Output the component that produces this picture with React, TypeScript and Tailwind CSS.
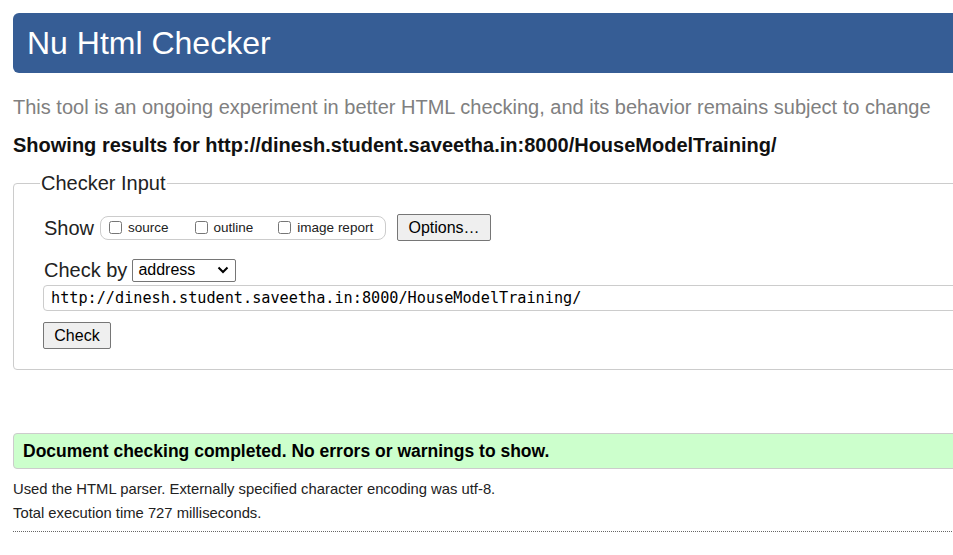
import React from 'react';

const sans = "font-['Liberation_Sans',Arial,sans-serif]";

const App: React.FC = () => {
  return (
    <div className={`h-[555px] w-[953px] overflow-hidden bg-white text-[#111] ${sans}`}>
      <div className="w-[1120px] pl-[13px] pt-[13px]">
        <header className="flex h-[60px] items-center rounded-[6px] bg-[#365d95] pl-[14px]">
          <h1 className="text-[32px] leading-none text-white">Nu Html Checker</h1>
        </header>

        <p className="mt-[22px] text-[20px] leading-[24px] text-[#808080]">
          This tool is an ongoing experiment in better HTML checking, and its behavior remains subject to change
        </p>

        <p className="mt-[15px] text-[20px] font-bold leading-[22px]">
          Showing results for http://dinesh.student.saveetha.in:8000/HouseModelTraining/
        </p>

        <fieldset className="mt-[15px] rounded-[4px] border border-[#cccccc] pb-[20px] pl-[30px]">
          <legend className="ml-[-4px] px-[1px] text-[20px] leading-[24px] text-[#222]">Checker Input</legend>

          <div className="mt-[19px] flex h-[27px] items-center">
            <span className="text-[20px] leading-none text-[#222]">Show</span>
            <div className="ml-[6px] flex h-[24px] w-[286px] items-center rounded-[8px] border border-[#cccccc] pl-[8px] text-[13.5px] text-[#222]">
              <label className="flex items-center">
                <input type="checkbox" className="m-0 h-[13px] w-[13px]" />
                <span className="ml-[6px] mt-[2px]">source</span>
              </label>
              <label className="ml-[26px] flex items-center">
                <input type="checkbox" className="m-0 h-[13px] w-[13px]" />
                <span className="ml-[6px] mt-[2px]">outline</span>
              </label>
              <label className="ml-[25px] flex items-center">
                <input type="checkbox" className="m-0 h-[13px] w-[13px]" />
                <span className="ml-[6px] mt-[2px]">image report</span>
              </label>
            </div>
            <button className="ml-[11px] h-[27px] w-[94px] rounded-[2px] border border-[#767676] bg-[#efefef] text-[16px] text-black">
              Options…
            </button>
          </div>

          <div className="mt-[17px] flex h-[24px] items-center">
            <span className="text-[20px] leading-none text-[#222]">Check by</span>
            <div className="ml-[5px] flex h-[23px] w-[104px] items-center justify-between rounded-[2px] border border-[#767676] pl-[5px] pr-[6px] text-[16px] text-black">
              <span>address</span>
              <svg width="12" height="8" viewBox="0 0 12 8" fill="none">
                <path d="M1.5 1.5 L6 6 L10.5 1.5" stroke="#000" strokeWidth="2" />
              </svg>
            </div>
          </div>

          <div className="ml-[-1px] mt-[3px] flex h-[26px] items-center rounded-[4px] border border-[#cccccc] pl-[7px] font-['DejaVu_Sans_Mono',monospace] text-[15.2px] text-black">
            http://dinesh.student.saveetha.in:8000/HouseModelTraining/
          </div>

          <button className="ml-[-1px] mt-[11px] h-[27px] w-[68px] rounded-[2px] border border-[#767676] bg-[#efefef] text-[16px] text-black">
            Check
          </button>
        </fieldset>

        <div className="mt-[63px] flex h-[36px] items-center rounded-[4px] border border-[#cccccc] bg-[#ccffcc] pl-[9px]">
          <p className="text-[17.5px] font-bold text-black">Document checking completed. No errors or warnings to show.</p>
        </div>

        <p className="mt-[12px] text-[14.8px] leading-[17px] text-[#222]">
          Used the HTML parser. Externally specified character encoding was utf-8.
        </p>
        <p className="mt-[7px] text-[14.8px] leading-[17px] text-[#222]">Total execution time 727 milliseconds.</p>
        <div className="mt-[9px] border-t border-dotted border-[#666]" />
      </div>
    </div>
  );
};

export default App;
